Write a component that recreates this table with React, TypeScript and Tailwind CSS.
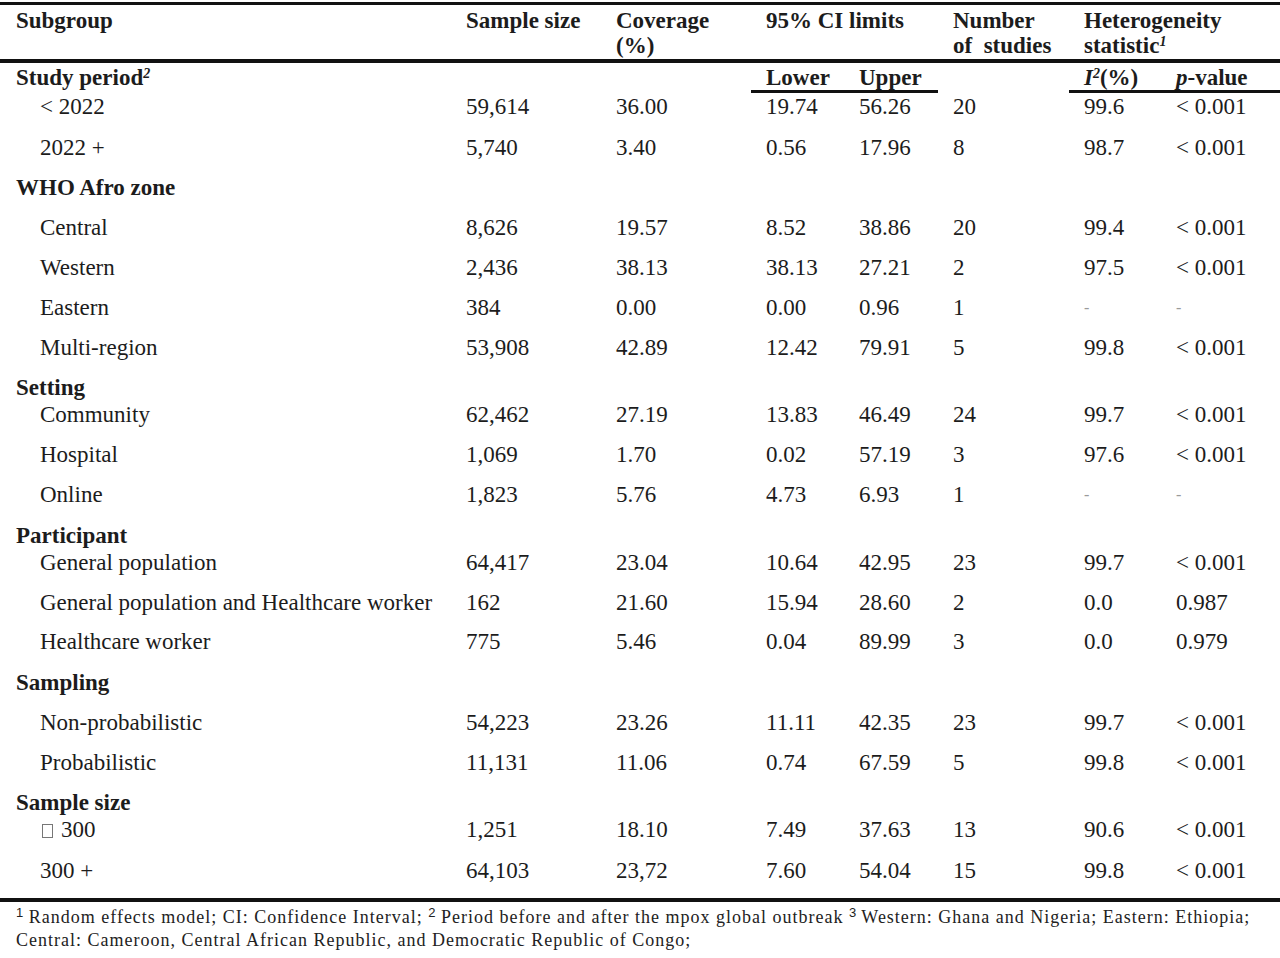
import React from 'react';

const cols = 'grid grid-cols-[451px_150px_150px_93px_94px_131px_92px_119px]';
const cell = 'pl-[15px] whitespace-nowrap';

type Row = {
  h: string;
  label: React.ReactNode;
  group?: boolean;
  vals?: string[];
};

const Box = () => (
  <span className="inline-block w-[11px] h-[14px] ml-[2px] border border-[#777] align-[-1px] mr-[8px]" />
);

const rows: Row[] = [
  { h: 'h-[40px]', label: '2022 +', vals: ['5,740', '3.40', '0.56', '17.96', '8', '98.7', '< 0.001'] },
  { h: 'h-[40px]', label: 'WHO Afro zone', group: true },
  { h: 'h-[40px]', label: 'Central', vals: ['8,626', '19.57', '8.52', '38.86', '20', '99.4', '< 0.001'] },
  { h: 'h-[40px]', label: 'Western', vals: ['2,436', '38.13', '38.13', '27.21', '2', '97.5', '< 0.001'] },
  { h: 'h-[40px]', label: 'Eastern', vals: ['384', '0.00', '0.00', '0.96', '1', '-', '-'] },
  { h: 'h-[40px]', label: 'Multi-region', vals: ['53,908', '42.89', '12.42', '79.91', '5', '99.8', '< 0.001'] },
  { h: 'h-[27px]', label: 'Setting', group: true },
  { h: 'h-[40px]', label: 'Community', vals: ['62,462', '27.19', '13.83', '46.49', '24', '99.7', '< 0.001'] },
  { h: 'h-[40px]', label: 'Hospital', vals: ['1,069', '1.70', '0.02', '57.19', '3', '97.6', '< 0.001'] },
  { h: 'h-[41px]', label: 'Online', vals: ['1,823', '5.76', '4.73', '6.93', '1', '-', '-'] },
  { h: 'h-[27px]', label: 'Participant', group: true },
  { h: 'h-[40px]', label: 'General population', vals: ['64,417', '23.04', '10.64', '42.95', '23', '99.7', '< 0.001'] },
  { h: 'h-[39px]', label: 'General population and Healthcare worker', vals: ['162', '21.60', '15.94', '28.60', '2', '0.0', '0.987'] },
  { h: 'h-[41px]', label: 'Healthcare worker', vals: ['775', '5.46', '0.04', '89.99', '3', '0.0', '0.979'] },
  { h: 'h-[40px]', label: 'Sampling', group: true },
  { h: 'h-[40px]', label: 'Non-probabilistic', vals: ['54,223', '23.26', '11.11', '42.35', '23', '99.7', '< 0.001'] },
  { h: 'h-[40px]', label: 'Probabilistic', vals: ['11,131', '11.06', '0.74', '67.59', '5', '99.8', '< 0.001'] },
  { h: 'h-[27px]', label: 'Sample size', group: true },
  { h: 'h-[41px]', label: <><Box />300</>, vals: ['1,251', '18.10', '7.49', '37.63', '13', '90.6', '< 0.001'] },
  { h: 'h-[39px]', label: '300 +', vals: ['64,103', '23,72', '7.60', '54.04', '15', '99.8', '< 0.001'] },
];

function DataRow({ row }: { row: Row }) {
  if (row.group) {
    return (
      <div className={`${cols} ${row.h}`}>
        <div className={`${cell} pl-[16px] font-bold`}>{row.label}</div>
      </div>
    );
  }
  return (
    <div className={`${cols} ${row.h}`}>
      <div className={`${cell} pl-[40px]`}>{row.label}</div>
      {row.vals!.map((v, i) => (
        <div key={i} className={`${cell} ${v === '-' ? 'text-[#9a9a9a] text-[16px]' : ''}`}>
          {v}
        </div>
      ))}
    </div>
  );
}

export default function App() {
  return (
    <div className="w-[1280px] h-[958px] bg-white text-[#1c1c1c] font-['Liberation_Serif',serif] text-[23px] leading-[24px] overflow-hidden">
      <div className="mt-[2px] border-t-[3px] border-[#111]">
        {/* header */}
        <div className={`${cols} pt-[3px] pb-[1px] border-b-[4px] border-[#111] font-bold leading-[25px]`}>
          <div className={`${cell} pl-[16px]`}>Subgroup</div>
          <div className={cell}>Sample size</div>
          <div className={cell}>
            Coverage
            <br />
            (%)
          </div>
          <div className={`${cell} col-span-2`}>95% CI limits</div>
          <div className={cell}>
            Number
            <br />
            of&nbsp; studies
          </div>
          <div className={`${cell} col-span-2`}>
            Heterogeneity
            <br />
            statistic<sup className="italic text-[14px]">1</sup>
          </div>
        </div>

        {/* study period row with sub headers */}
        <div className={`${cols} h-[30px] font-bold`}>
          <div className={`${cell} pl-[16px] pt-[3px]`}>
            Study period<sup className="italic text-[14px]">2</sup>
          </div>
          <div />
          <div />
          <div className={`${cell} pt-[3px] border-b-[3px] border-[#111]`}>Lower</div>
          <div className={`${cell} pt-[3px] border-b-[3px] border-[#111]`}>Upper</div>
          <div />
          <div className={`${cell} pt-[3px] border-b-[3px] border-[#111]`}>
            <span className="italic">I</span>
            <sup className="italic text-[14px]">2</sup>(%)
          </div>
          <div className={`${cell} pt-[3px] border-b-[3px] border-[#111]`}>
            <span className="italic">p</span>-value
          </div>
        </div>

        <div className={`${cols} h-[43px] pt-[2px]`}>
          <div className={`${cell} pl-[40px]`}>&lt; 2022</div>
          {['59,614', '36.00', '19.74', '56.26', '20', '99.6', '< 0.001'].map((v, i) => (
            <div key={i} className={cell}>
              {v}
            </div>
          ))}
        </div>

        {rows.map((r, i) => (
          <DataRow key={i} row={r} />
        ))}
      </div>

      {/* footnote */}
      <div className="border-t-[4px] border-[#111] pt-[4px] pl-[16px] text-[18px] tracking-[1px] leading-[23px] text-[#222] whitespace-nowrap">
        <sup className="font-['Liberation_Sans',sans-serif] text-[13px] tracking-normal">1</sup> Random effects model; CI: Confidence Interval;{' '}
        <sup className="font-['Liberation_Sans',sans-serif] text-[13px] tracking-normal">2</sup> Period before and after the mpox global outbreak{' '}
        <sup className="font-['Liberation_Sans',sans-serif] text-[13px] tracking-normal">3</sup> Western: Ghana and Nigeria; Eastern: Ethiopia;
        <br />
        Central: Cameroon, Central African Republic, and Democratic Republic of Congo;
      </div>
    </div>
  );
}
